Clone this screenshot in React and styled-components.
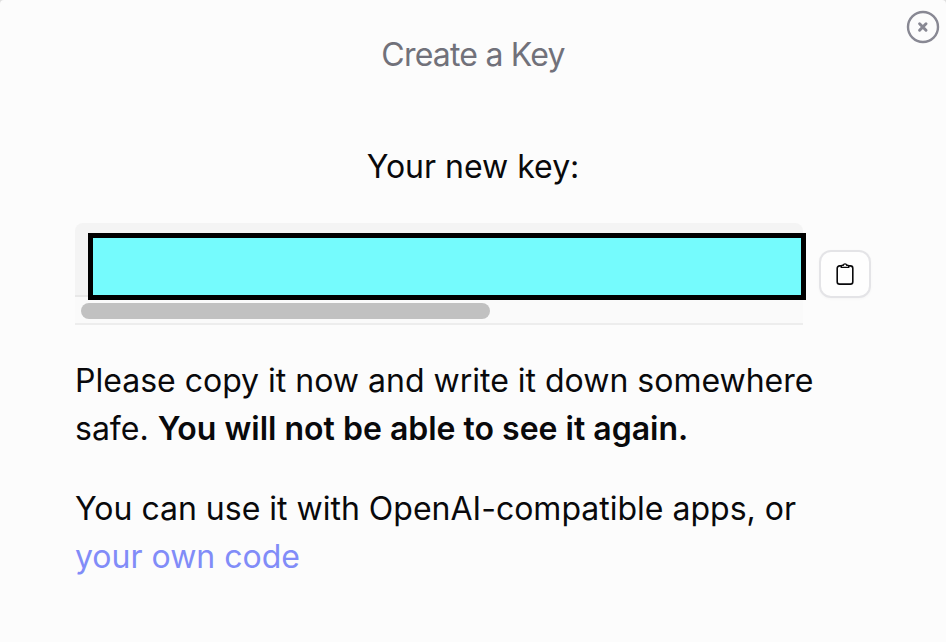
import React from 'react';
import styled, { createGlobalStyle } from 'styled-components';

const App = () => {
  return (
    <>
      <GlobalStyle />
      <Modal>
        <Title>Create a Key</Title>
        <CloseButton aria-label="Close">
          <svg width="34" height="34" viewBox="0 0 34 34" fill="none" stroke="currentColor">
            <circle cx="17" cy="17" r="15" strokeWidth="2.4" />
            <path d="M13.6 13.8l6.4 6.400M20 13.800l-6.400 6.400" strokeWidth="3" strokeLinecap="round" />
          </svg>
        </CloseButton>
        <Content>
          <Subtitle>Your new key:</Subtitle>
          <KeyRow>
            <KeyBox>
              <KeyArea>
                <KeyMask />
              </KeyArea>
              <ScrollTrack>
                <ScrollThumb />
              </ScrollTrack>
            </KeyBox>
            <CopyButton aria-label="Copy">
              <svg width="18" height="24" viewBox="0 0 18 24" fill="none" stroke="currentColor" strokeWidth="1.6">
                <path d="M5.2 3.9H3.6a2.4 2.4 0 0 0-2.4 2.4v13.4a2.4 2.4 0 0 0 2.4 2.4h10.8a2.4 2.4 0 0 0 2.4-2.4V6.3a2.4 2.4 0 0 0-2.4-2.4h-1.6" />
                <path d="M5.3 5.4V4.2a1 1 0 0 1 1-1h.9a1.9 1.9 0 0 1 3.6 0h.9a1 1 0 0 1 1 1v1.2z" strokeWidth="1.4" />
              </svg>
            </CopyButton>
          </KeyRow>
          <Text>
            Please copy it now and write it down somewhere safe. <strong>You will not be able to see it again.</strong>
          </Text>
          <Text>
            You can use it with OpenAI-compatible apps, or <a href="#">your own code</a>
          </Text>
        </Content>
      </Modal>
    </>
  )
}

export default App;


const GlobalStyle = createGlobalStyle`
  * {
    box-sizing: border-box;
  }
  body {
    margin: 0;
    background: #dedede;
    font-family: Inter, sans-serif;
  }
`

const Modal = styled.div`
  position: relative;
  width: 946px;
  height: 642px;
  overflow: hidden;
  border-radius: 4px 4px 0 0;
  background: #fcfcfc;
  color: #09090b;
`

const Title = styled.h2`
  margin: 0;
  padding-top: 31px;
  font-size: 32px;
  line-height: 48px;
  font-weight: 400;
  letter-spacing: -0.8px;
  text-align: center;
  color: #71717a;
`

const CloseButton = styled.button`
  position: absolute;
  top: 10px;
  right: 6px;
  display: flex;
  padding: 0;
  border: 0;
  background: none;
  color: #888893;
`

const Content = styled.div`
  padding: 64px 75px 0;
`

const Subtitle = styled.h3`
  margin: 0;
  font-size: 32px;
  line-height: 48px;
  font-weight: 400;
  text-align: center;
`

const KeyRow = styled.div`
  display: flex;
  align-items: center;
  gap: 16px;
  margin-top: 32px;
`

const KeyBox = styled.div`
  width: 728px;
`

const KeyArea = styled.div`
  height: 74px;
  padding: 10px 0 0 13px;
  border-bottom: 2px solid #e8e8e8;
  border-radius: 8px 8px 0 0;
  background: #f4f4f4;
`

const KeyMask = styled.div`
  position: relative;
  width: 718px;
  height: 67px;
  border: 5px solid #000;
  background: #75fbfd;
`

const ScrollTrack = styled.div`
  height: 28px;
  padding: 6px;
  border-bottom: 2px solid #ededed;
  background: #fafafa;
`

const ScrollThumb = styled.div`
  width: 409px;
  height: 16px;
  border-radius: 8px;
  background: #c1c1c1;
`

const CopyButton = styled.button`
  display: flex;
  align-items: center;
  justify-content: center;
  width: 52px;
  height: 48px;
  padding: 0;
  border: 2px solid #e4e4e7;
  border-radius: 12px;
  background: #fefefe;
  box-shadow: 0 1px 3px rgba(0, 0, 0, 0.03);
  color: #09090b;
`

const Text = styled.p`
  margin: 32px 0 0;
  font-size: 32px;
  line-height: 48px;

  strong {
    font-weight: 600;
  }

  a {
    color: #818cf8;
    text-decoration: none;
  }
`
